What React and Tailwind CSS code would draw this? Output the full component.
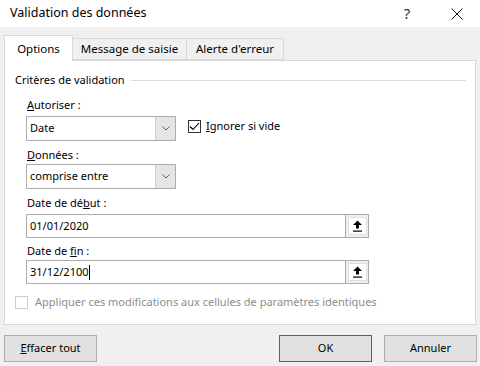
import React from 'react';

function Chevron() {
  return (
    <svg width="8" height="5" viewBox="0 0 8 5" className="text-[#606060]">
      <path d="M0.5 0.5 L4 4 L7.5 0.5" fill="none" stroke="currentColor" strokeWidth="1" />
    </svg>
  );
}

function UpArrow() {
  return (
    <svg width="11" height="12" viewBox="0 0 11 12">
      <path d="M5.5 0.5 L10 5 L7 5 L7 8.5 L4 8.5 L4 5 L1 5 Z" fill="#000" />
      <rect x="1" y="10.5" width="9" height="1.2" fill="#000" />
    </svg>
  );
}

function Combo({ value }) {
  return (
    <div className="flex w-[150px] h-[25px] border border-[#acacac] bg-white">
      <div className="flex-1 flex items-center pl-[3px]">{value}</div>
      <div className="w-[20px] flex items-center justify-center bg-[#e5e5e5] border-l border-[#cfcfcf]">
        <Chevron />
      </div>
    </div>
  );
}

function DateInput({ value, caret }) {
  return (
    <div className="flex w-[343px] h-[24px] border border-[#acacac] bg-white">
      <div className="flex-1 flex items-center pl-[3px]">
        {value}
        {caret && <span className="w-px h-[15px] bg-black" />}
      </div>
      <div className="w-[23px] flex items-center justify-center bg-[#f0f0f0] border-l border-[#acacac]">
        <div className="w-[19px] h-[18px] bg-white border border-[#e0e0e0] flex items-center justify-center">
          <UpArrow />
        </div>
      </div>
    </div>
  );
}

function Btn({ children, primary }) {
  return (
    <div
      className={`w-[93px] h-[27px] flex items-center justify-center bg-[#e1e1e1] border ${
        primary ? 'border-[#0078d7]' : 'border-[#adadad]'
      }`}
    >
      {children}
    </div>
  );
}

export default function App() {
  return (
    <div
      className="w-[480px] h-[366px] bg-[#f0f0f0] text-[11px] text-black overflow-hidden flex flex-col"
      style={{ fontFamily: '"Noto Sans", "Open Sans", sans-serif' }}
    >
      {/* title bar */}
      <div className="h-[27px] bg-white flex items-center pl-[10px] shrink-0">
        <span className="text-[12.5px] flex-1">Validation des données</span>
        <span className="text-[15px] text-[#333] w-[20px] mr-[34px] text-center">?</span>
        <svg width="12" height="12" viewBox="0 0 12 12" className="mr-[17px]">
          <path d="M0.5 0.5 L11.5 11.5 M11.5 0.5 L0.5 11.5" stroke="#111" strokeWidth="1" />
        </svg>
      </div>

      {/* tabs */}
      <div className="flex items-end pl-[4px] mt-[8px] h-[25px] shrink-0 text-[11.5px]">
        <div className="relative z-10 w-[69px] h-[26px] bg-white border border-b-0 border-[#d9d9d9] flex items-center justify-center -mb-px">
          Options
        </div>
        <div className="w-[114px] h-[22px] border border-l-0 border-[#d9d9d9] flex items-center justify-center">
          Message de saisie
        </div>
        <div className="w-[97px] h-[22px] border border-l-0 border-[#d9d9d9] flex items-center justify-center">
          Alerte d'erreur
        </div>
      </div>

      {/* panel */}
      <div className="ml-[4px] w-[472px] h-[265px] bg-white border border-[#d9d9d9] flex flex-col pl-[10px] shrink-0">
        <div className="flex items-center mt-[11px] h-[16px] mr-[9px]">
          <span>Critères de validation</span>
          <div className="ml-[6px] flex-1 h-px bg-[#dcdcdc]" />
        </div>

        <div className="pl-[11px] flex flex-col">
          <div className="mt-[8px] h-[17px] leading-[17px] pl-px">
            <span className="underline">A</span>utoriser :
          </div>
          <div className="flex items-start mt-[3px]">
            <Combo value="Date" />
            <div className="ml-[12px] mt-[2px] flex items-center">
              <div className="w-[13px] h-[13px] border border-[#333] bg-white flex items-center justify-center">
                <svg width="11" height="9" viewBox="0 0 11 9">
                  <path d="M1 4.5 L4 7.5 L10 1" fill="none" stroke="#000" strokeWidth="1.1" />
                </svg>
              </div>
              <span className="ml-[5px]">
                <span className="underline">I</span>gnorer si vide
              </span>
            </div>
          </div>

          <div className="mt-[5px] h-[17px] leading-[17px] pl-px">
            <span className="underline">D</span>onnées :
          </div>
          <div className="mt-[1px]">
            <Combo value="comprise entre" />
          </div>

          <div className="mt-[5px] h-[18px] leading-[18px] pl-px">
            Date de dé<span className="underline">b</span>ut :
          </div>
          <div className="mt-[2px]">
            <DateInput value="01/01/2020" />
          </div>

          <div className="mt-[4px] h-[18px] leading-[18px] pl-px">
            Date de <span className="underline">f</span>in :
          </div>
          <div>
            <DateInput value="31/12/2100" caret />
          </div>
        </div>

        <div className="flex items-center mt-[10px]">
          <div className="w-[13px] h-[13px] border border-[#cccccc] bg-white" />
          <span className="ml-[7px] text-[#8d8d8d]">
            Appliquer ces modifications aux cellules de paramètres identiques
          </span>
        </div>
      </div>

      {/* buttons */}
      <div className="flex items-center pl-[4px] mt-[10px]">
        <Btn>
          <span>
            <span className="underline">E</span>ffacer tout
          </span>
        </Btn>
        <div className="ml-[182px]">
          <Btn primary>OK</Btn>
        </div>
        <div className="ml-[12px]">
          <Btn>Annuler</Btn>
        </div>
      </div>
    </div>
  );
}
